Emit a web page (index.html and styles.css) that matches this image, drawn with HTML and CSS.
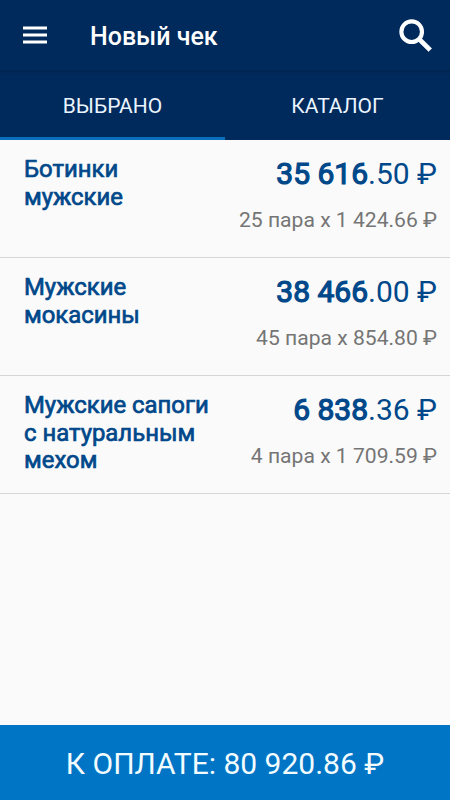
FILE: index.html
```html
<!DOCTYPE html>
<html lang="ru">
<head>
<meta charset="utf-8">
<title>Новый чек</title>
<link rel="stylesheet" href="styles.css">
</head>
<body>
<div class="app">
  <header class="bar">
    <svg class="menu" viewBox="0 0 24 18"><path d="M0 2h24M0 9h24M0 16h24" stroke="#fff" stroke-width="3"/></svg>
    <h1 class="title">Новый чек</h1>
    <svg class="search" viewBox="0 0 32 32"><circle cx="12.3" cy="12.3" r="10" fill="none" stroke="#fff" stroke-width="4"/><path d="M19 19.5l3-.5 9.7 9.5-3 3-9.7-9.5z" fill="#fff" stroke="#fff" stroke-width=".5"/></svg>
  </header>
  <nav class="tabs">
    <div class="tab active">ВЫБРАНО</div>
    <div class="tab">КАТАЛОГ</div>
  </nav>
  <main class="list">
    <section class="item">
      <h2 class="name">Ботинки<br>мужские</h2>
      <div class="sums"><div class="total"><b>35 616</b>.50 ₽</div><div class="unit">25 пара x 1 424.66 ₽</div></div>
    </section>
    <section class="item">
      <h2 class="name">Мужские<br>мокасины</h2>
      <div class="sums"><div class="total"><b>38 466</b>.00 ₽</div><div class="unit">45 пара x 854.80 ₽</div></div>
    </section>
    <section class="item">
      <h2 class="name">Мужские сапоги<br>с натуральным<br>мехом</h2>
      <div class="sums"><div class="total"><b>6 838</b>.36 ₽</div><div class="unit">4 пара x 1 709.59 ₽</div></div>
    </section>
  </main>
  <footer class="pay">К ОПЛАТЕ: 80 920.86 ₽</footer>
</div>
</body>
</html>
```

FILE: styles.css
```css
* { box-sizing: border-box; }
body { margin: 0; font-family: Roboto, sans-serif; background: #fafafa; }
.app { width: 450px; height: 800px; display: flex; flex-direction: column; overflow: hidden; }
.bar { height: 70px; flex: none; background: #002a5c; color: #fff; display: flex; align-items: center; padding: 0 18px 0 23px; }
.menu { width: 24px; height: 18px; margin-top: -1px; }
.title { margin: 3px 0 0 43px; font-size: 25px; line-height: 30px; font-weight: 500; flex: 1; white-space: nowrap; }
.search { width: 33px; height: 33px; }
.tabs { height: 70px; flex: none; display: flex; background: linear-gradient(#00244f, #002a5c 5px); color: #eaf4ff; font-size: 21px; }
.tab { flex: 1; display: flex; align-items: center; justify-content: center; padding-top: 4px; border-bottom: 3px solid transparent; }
.tab.active { border-color: #0b6fbd; }
.list { flex: 1; }
.item { height: 118px; display: flex; justify-content: space-between; padding: 16px 13px 0 24px; border-bottom: 1px solid #d6d6d6; }
.name { margin: 0; font-size: 23.9px; line-height: 27.5px; font-weight: 400; -webkit-text-stroke: 0.7px #00488a; color: #00488a; white-space: nowrap; }
.sums { text-align: right; white-space: nowrap; }
.total { font-size: 30px; line-height: 36px; color: #00488a; }
.total b { font-weight: 400; -webkit-text-stroke: 1.2px #00488a; }
.unit { margin-top: 15px; font-size: 21.1px; line-height: 26px; color: #757575; }
.pay { height: 75px; flex: none; background: #0075c6; color: #f2fcff; display: flex; align-items: center; justify-content: center; font-size: 30px; padding-top: 2px; white-space: nowrap; }
```
